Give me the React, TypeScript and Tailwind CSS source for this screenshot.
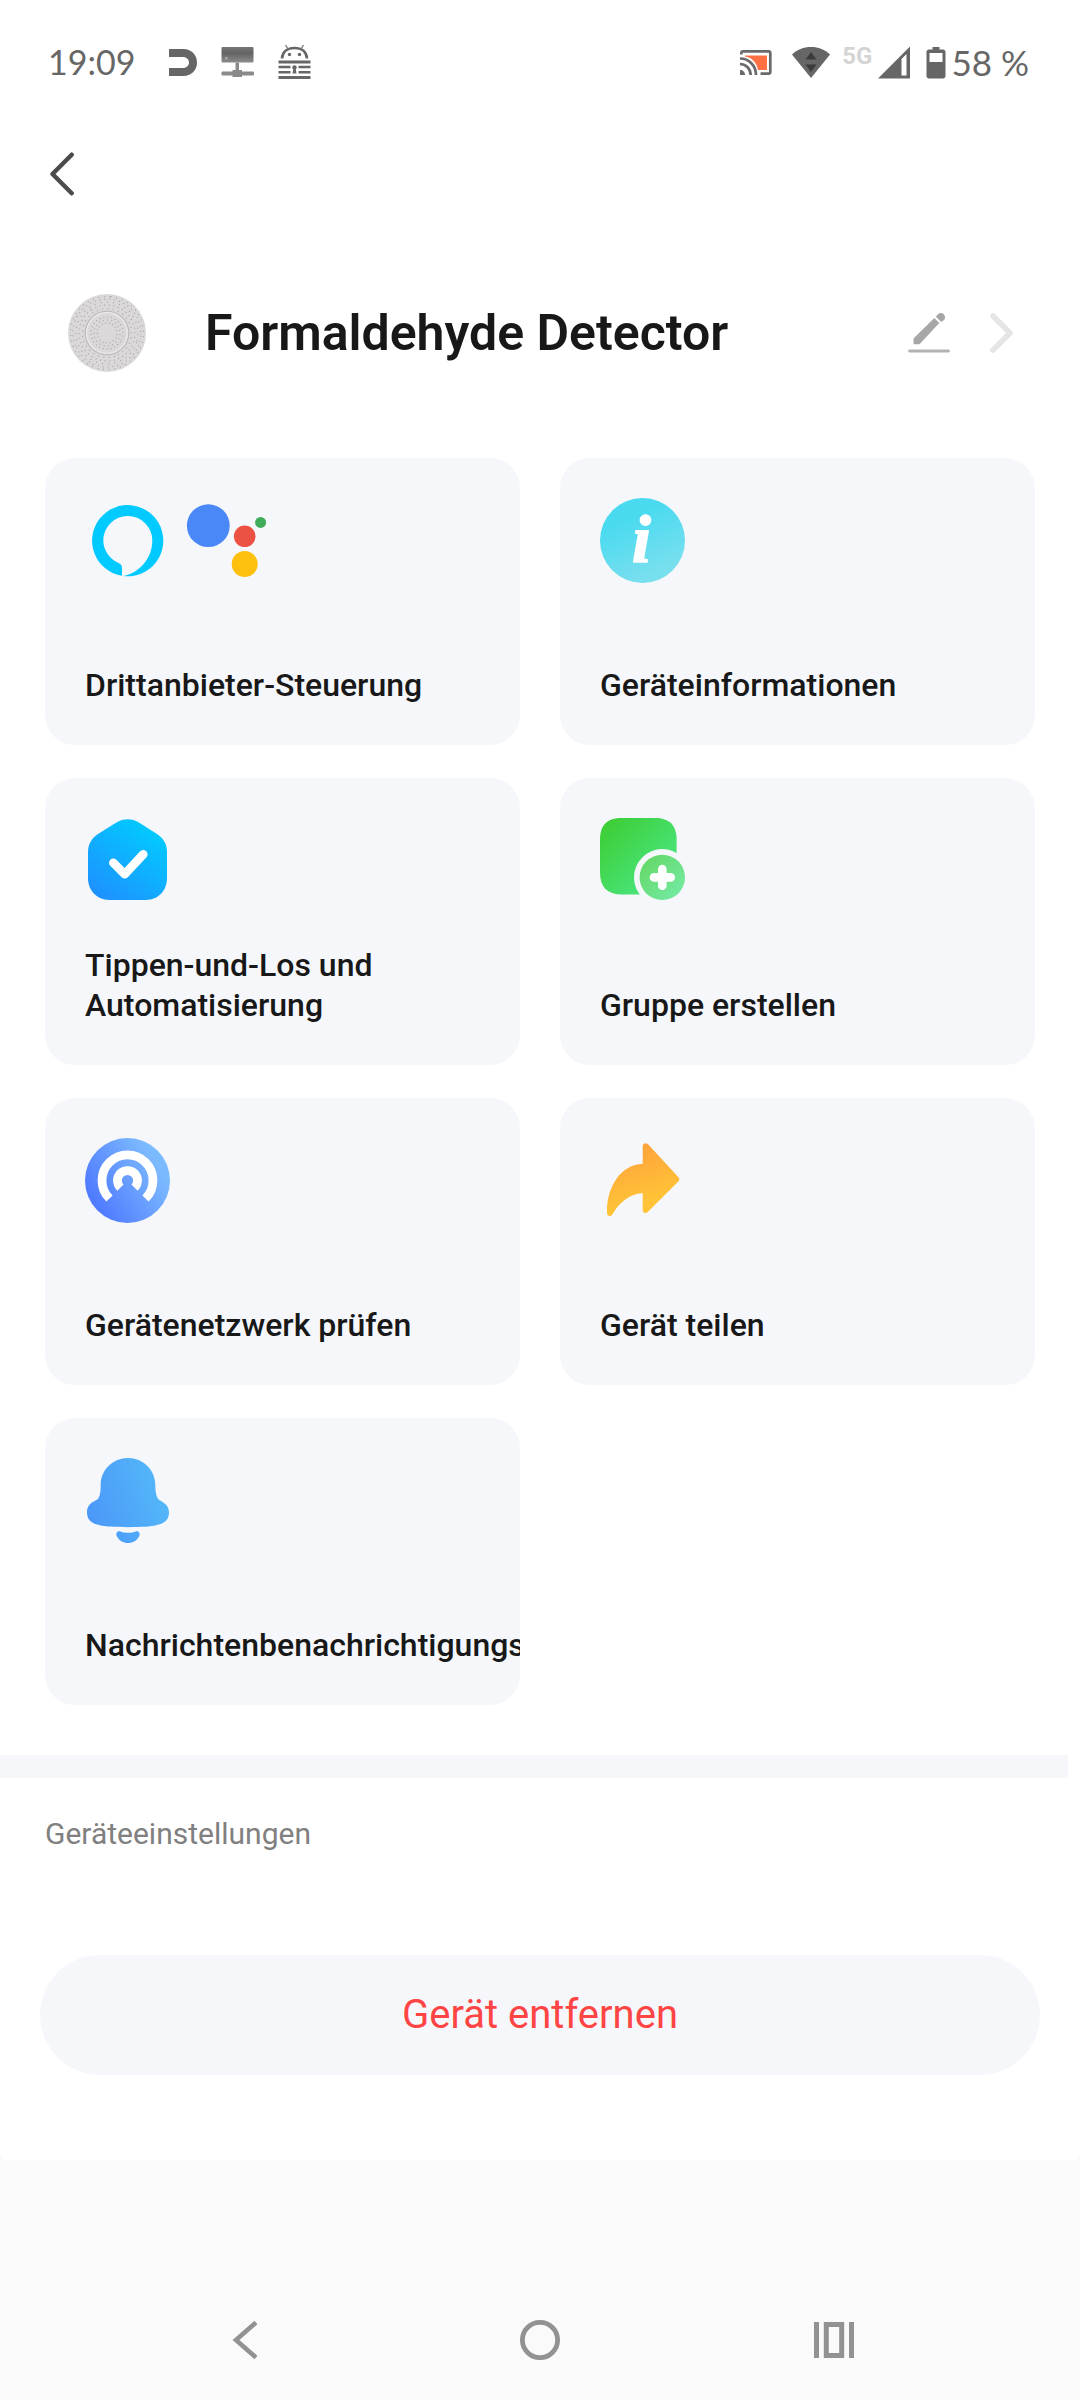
import React from "react";

interface Tile {
  id: string;
  label: string;
  icon: React.ReactNode;
}

function AlexaIcon() {
  return (
    <svg className="h-[85px] w-[85px]" viewBox="0 0 85 85" aria-hidden="true">
      <path
        fill="#00caff"
        d="M37 77.84V70C37 68 36.5 66.3 34 65.2C25 61.5 18.3 52.5 18.3 42.5A24.5 24.5 0 0 1 67.3 42.5C67.3 60 55 74.5 38.5 78.05A35.6 35.6 0 1 0 37 77.84Z"
      />
    </svg>
  );
}

function AssistantIcon() {
  return (
    <svg className="h-[85px] w-[85px]" viewBox="0 0 85 85" aria-hidden="true">
      <circle cx="23.3" cy="27.7" r="21.4" fill="#4a88f8" />
      <circle cx="59.7" cy="38.3" r="10.8" fill="#ed5144" />
      <circle cx="75.6" cy="24.4" r="5.5" fill="#3fac59" />
      <circle cx="59.7" cy="66" r="13" fill="#fdc00f" />
    </svg>
  );
}

function InfoIcon() {
  return (
    <svg className="h-[85px] w-[85px]" viewBox="0 0 85 85" aria-hidden="true">
      <defs>
        <linearGradient id="info" x1="0.3" y1="0.1" x2="0.7" y2="1">
          <stop offset="0.15" stopColor="#4adaf0" />
          <stop offset="0.85" stopColor="#77dfee" />
        </linearGradient>
      </defs>
      <circle cx="42.5" cy="42.5" r="42.5" fill="url(#info)" />
      <text
        x="32"
        y="64"
        fill="#fff"
        stroke="#fff"
        strokeWidth="1.6"
        strokeLinejoin="round"
        className="font-['Liberation_Serif',serif] text-[68px] font-bold italic"
      >
        i
      </text>
    </svg>
  );
}

function SceneIcon() {
  return (
    <svg className="h-[85px] w-[85px]" viewBox="0 0 85 85" aria-hidden="true">
      <defs>
        <linearGradient id="scene" x1="0.15" y1="1" x2="0.8" y2="0.1">
          <stop offset="0" stopColor="#1e90ff" />
          <stop offset="1" stopColor="#02caff" />
        </linearGradient>
      </defs>
      <path
        fill="url(#scene)"
        d="M31 4.7C38.5 .2 47 .2 54.3 4.7L72 16C78.5 20.2 82 26.5 82 33.7V60.3C82 72.5 73 82 61 82H24.3C12 82 3 72.5 3 60.3V33.7C3 26.5 6.5 20.2 13 16Z"
      />
      <path d="M28.3 44.7L39.7 56.3L58.3 36.3" fill="none" stroke="#fff" strokeWidth="8.6" strokeLinecap="round" strokeLinejoin="round" />
    </svg>
  );
}

function GroupIcon() {
  return (
    <svg className="h-[85px] w-[85px]" viewBox="0 0 85 85" aria-hidden="true">
      <defs>
        <linearGradient id="group" x1="0" y1="0" x2="1" y2="1">
          <stop offset="0.05" stopColor="#3dcd33" />
          <stop offset="0.8" stopColor="#4ae57f" />
        </linearGradient>
        <linearGradient id="plus" x1="0.1" y1="0.1" x2="0.9" y2="0.9">
          <stop offset="0" stopColor="#65d868" />
          <stop offset="1" stopColor="#73eaa2" />
        </linearGradient>
      </defs>
      <path
        fill="url(#group)"
        d="M22 0H54.6C70 0 76.6 7.5 76.6 22V54.6C76.6 70 69 76.6 54.6 76.6H22C7 76.6 0 69 0 54.6V22C0 7 7 0 22 0Z"
      />
      <circle cx="62.3" cy="59.4" r="28.3" fill="#f5f7fb" />
      <circle cx="62.3" cy="59.4" r="22.7" fill="url(#plus)" />
      <path d="M54 59.4H70.7M62.3 51V67.8" stroke="#fff" strokeWidth="8.6" strokeLinecap="round" />
    </svg>
  );
}

function NetworkIcon() {
  return (
    <svg className="h-[85px] w-[85px]" viewBox="0 0 85 85" aria-hidden="true">
      <defs>
        <linearGradient id="network" x1="0.1" y1="0.8" x2="0.9" y2="0.3">
          <stop offset="0.05" stopColor="#507cff" />
          <stop offset="0.95" stopColor="#7cbaff" />
        </linearGradient>
      </defs>
      <circle cx="42.5" cy="42.5" r="42.5" fill="url(#network)" />
      <path d="M24.5 60.5A25.5 25.5 0 1 1 60.5 60.5" fill="none" stroke="#fff" strokeWidth="8.8" />
      <path d="M35.4 49.6A10 10 0 1 1 49.6 49.6" fill="none" stroke="#fff" strokeWidth="8.8" />
    </svg>
  );
}

function ShareIcon() {
  return (
    <svg className="h-[85px] w-[85px]" viewBox="0 0 85 85" aria-hidden="true">
      <defs>
        <linearGradient id="share" x1="0.3" y1="0" x2="0.6" y2="1">
          <stop offset="0.1" stopColor="#ffa53b" />
          <stop offset="0.8" stopColor="#ffc337" />
        </linearGradient>
      </defs>
      <path
        fill="url(#share)"
        d="M42.7 8.5C42.7 5.3 46 4.3 48 6.3L78.5 39.3C79.7 40.7 79.7 42 78.5 43.3L48 73.8C46 76 42.7 75.3 42.7 72.3V55C30 56 20 63.5 12.7 76C10.8 79.3 7 78.5 7 74.5C6.5 48 21.5 26.5 42.7 25.7Z"
      />
    </svg>
  );
}

function BellIcon() {
  return (
    <svg className="h-[85px] w-[85px]" viewBox="0 0 85 85" aria-hidden="true">
      <defs>
        <linearGradient id="bell" gradientUnits="userSpaceOnUse" x1="5" y1="62" x2="80" y2="35">
          <stop offset="0" stopColor="#4b98f8" />
          <stop offset="1" stopColor="#54b7f9" />
        </linearGradient>
      </defs>
      <path
        fill="url(#bell)"
        d="M43 0C28 0 16 11.5 15.7 26.5C15.7 32 15.5 37 13.3 40.5C12 43 2 44 2 54.5C2 62.5 7 65.5 15 67.3C23 69.8 63 69.8 71 67.3C79 65.5 84 62.5 84 54.5C84 45 75 43.5 73 40.7C70.7 37 70.3 32 70.3 26.5C70 11.5 58 0 43 0Z"
      />
      <path fill="url(#bell)" d="M34.5 73.3C40 75.3 46 75.3 51.5 73.3C54 72.8 55.3 75.5 54.3 78C52 82.5 48 85 43 85C38 85 34 82.5 31.7 78C30.7 75.5 32 72.8 34.5 73.3Z" />
    </svg>
  );
}

const TILES: Tile[] = [
  { id: "third-party", label: "Drittanbieter-Steuerung", icon: <><AlexaIcon /><AssistantIcon /></> },
  { id: "info", label: "Geräteinformationen", icon: <InfoIcon /> },
  { id: "automation", label: "Tippen-und-Los und Automatisierung", icon: <SceneIcon /> },
  { id: "group", label: "Gruppe erstellen", icon: <GroupIcon /> },
  { id: "network", label: "Gerätenetzwerk prüfen", icon: <NetworkIcon /> },
  { id: "share", label: "Gerät teilen", icon: <ShareIcon /> },
  { id: "notifications", label: "Nachrichtenbenachrichtigungseinstellungen", icon: <BellIcon /> },
];

function StatusBar() {
  return (
    <div className="flex h-[124px] items-center justify-between pr-[51px] pl-12 font-['Lato',sans-serif] text-[34px] leading-10 text-[#666666]">
      <div className="flex items-center gap-6">
        <span className="pr-[10px]">19:09</span>
        <svg className="h-[34px] w-7" viewBox="0 0 28 34" aria-hidden="true">
          <path fill="#666" d="M0 4H14.5C22 4 28 9.5 28 17.5S22 31 14.5 31H0V23H14C17.5 23 20 20.5 20 17.5S17.5 12 14 12H0Z" />
        </svg>
        <svg className="h-[34px] w-[33px]" viewBox="0 0 33 34" aria-hidden="true">
          <defs>
            <linearGradient id="screen" x1="0" y1="0" x2="0" y2="1">
              <stop offset="0" stopColor="#777" />
              <stop offset="0.4" stopColor="#636363" />
              <stop offset="1" stopColor="#8c8c8c" />
            </linearGradient>
          </defs>
          <rect x="0.5" y="2" width="32" height="15.5" rx="1" fill="url(#screen)" />
          <rect x="4" y="12" width="2.5" height="2.5" fill="#aaa" />
          <path d="M14.5 17.5H18V25H21V26.5H32C33.5 26.5 33.5 30.5 32 30.5H21V32H11.5V30.5H1.5C0 30.5 0 26.5 1.5 26.5H11.5V25H14.5Z" fill="#8a8a8a" />
        </svg>
        <svg className="h-[34px] w-[33px]" viewBox="0 0 33 34" aria-hidden="true">
          <path d="M4 13.5C4.5 6.5 9.5 3 16.5 3S28.5 6.5 29 13.5" fill="none" stroke="#666" strokeWidth="2.6" />
          <path d="M7.5 0L10 4M25.5 0L23 4" stroke="#777" strokeWidth="1.3" />
          <circle cx="11.5" cy="9.5" r="1.7" fill="#666" />
          <circle cx="21.5" cy="9.5" r="1.7" fill="#666" />
          <path d="M0.5 17H32.5M0.5 32.5H32.5" stroke="#666" strokeWidth="2.8" />
          <path d="M0.5 22H12.5M20.5 22H32.5M0.5 27.2H12.5M20.5 27.2H32.5" stroke="#666" strokeWidth="2.6" />
          <circle cx="16.5" cy="22.5" r="2.2" fill="#666" />
          <path d="M15.7 22H17.3L18.5 28.5H14.5Z" fill="#666" />
        </svg>
      </div>
      <div className="flex items-center">
        <svg className="mr-5 h-[34px] w-8" viewBox="0 0 32 34" aria-hidden="true">
          <path d="M5 10.5H27V25H18C17 18 12 12.5 5 11.5Z" fill="#ff7043" />
          <path d="M1.3 9.5V8C1.3 7 2 6.3 3 6.3H28.5C29.6 6.3 30.3 7 30.3 8V27C30.3 28 29.6 28.7 28.5 28.7H20.5" fill="none" stroke="#6a6a6a" strokeWidth="2.7" />
          <path d="M0 13.5C9 13.5 16 20.5 16 30M0 19C6 19 10.7 24 10.7 30" fill="none" stroke="#6a6a6a" strokeWidth="2.7" />
          <path d="M0 25C3 25 5 27 5 30H0Z" fill="#6a6a6a" />
        </svg>
        <svg className="mr-3 h-[34px] w-[38px]" viewBox="0 0 38 34" aria-hidden="true">
          <path d="M19 33L0 9.5C5 4.5 11.5 2 19 2S33 4.5 38 9.5Z" fill="#666" />
          <path d="M19 7L24.5 14.5H13.5ZM13.5 19.5H24.5L19 27Z" fill="#3b3b3b" />
        </svg>
        <span className="mr-[6px] pb-3 font-['Roboto',sans-serif] text-2xl leading-6 font-bold text-[#d4d4d4]">5G</span>
        <svg className="mr-4 h-[34px] w-8" viewBox="0 0 32 34" aria-hidden="true">
          <path fillRule="evenodd" d="M32 1.5V33.5H0ZM28.5 9L23.5 14V30.5H28.5Z" fill="#666" />
        </svg>
        <svg className="mr-[5px] h-[34px] w-5" viewBox="0 0 20 34" aria-hidden="true">
          <path fillRule="evenodd" d="M6.5 2H13.5V4.5H17C18.5 4.5 19.5 5.5 19.5 7V31C19.5 32.5 18.5 33.5 17 33.5H3C1.5 33.5 0.5 32.5 0.5 31V7C0.5 5.5 1.5 4.5 3 4.5H6.5ZM3.5 8V17H16.5V8Z" fill="#666" />
        </svg>
        <span className="text-[35px]">58 %</span>
      </div>
    </div>
  );
}

// perforated round housing of the sensor
const HOLE_RINGS = [
  { r: 10, gap: "1 2.7" },
  { r: 13, gap: "1 3.3" },
  { r: 16, gap: "1 2.9" },
  { r: 24.5, gap: "1 4.3" },
  { r: 28, gap: "1 3.6" },
  { r: 31, gap: "1 5.2" },
  { r: 34, gap: "1 3.9" },
  { r: 36.5, gap: "1 4.7" },
];

function DetectorImage() {
  return (
    <svg className="h-[78px] w-[78px] shrink-0" viewBox="0 0 78 78" role="img" aria-label="Formaldehyde Detector">
      <circle cx="39" cy="39" r="39" fill="#dad8d8" />
      {HOLE_RINGS.map((ring) => (
        <circle
          key={ring.r}
          cx="39"
          cy="39"
          r={ring.r}
          fill="none"
          stroke="#a3a1a1"
          strokeWidth="1.1"
          strokeDasharray={ring.gap}
          transform={`rotate(${ring.r * 47} 39 39)`}
        />
      ))}
      <circle cx="39" cy="39" r="21.8" fill="none" stroke="#bfbdbd" strokeWidth="1.3" />
      <circle cx="39" cy="39" r="20.3" fill="none" stroke="#ebe9e9" strokeWidth="1.2" />
    </svg>
  );
}

function ActionTile({ tile }: { tile: Tile }) {
  return (
    <button
      type="button"
      className="flex h-[287px] min-w-0 cursor-pointer flex-col justify-between overflow-hidden rounded-[30px] bg-[#f5f7fb] p-10 text-left"
    >
      <span className="flex gap-[15px]">{tile.icon}</span>
      <span className="text-[32px] leading-10 font-medium text-[#181818]">{tile.label}</span>
    </button>
  );
}

export default function App() {
  return (
    <div className="flex min-h-screen flex-col bg-[#fafafa] font-['Roboto',sans-serif]">
      <main className="rounded-b-md bg-white">
        <StatusBar />

        <header className="flex h-[100px] items-center pl-[50px]">
          <button type="button" aria-label="Zurück" className="cursor-pointer">
            <svg className="h-11 w-6" viewBox="0 0 24 44" aria-hidden="true">
              <path d="M21.7 2.7L2.5 22L21.7 41.3" fill="none" stroke="#4b4b4b" strokeWidth="4.4" strokeLinecap="round" strokeLinejoin="round" />
            </svg>
          </button>
        </header>

        {/* Device name */}
        <section className="flex h-[218px] items-center pr-[66px] pl-[68px]">
          <DetectorImage />
          <h1 className="ml-[59px] flex-1 text-[50px] leading-[60px] font-semibold text-[#181818]">Formaldehyde Detector</h1>
          <button type="button" aria-label="Name bearbeiten" className="mr-10 cursor-pointer">
            <svg className="h-[42px] w-[42px]" viewBox="0 0 42 42" aria-hidden="true">
              <path d="M5.5 26.5L26.3 6L31.3 11L11.5 32.3H5.5Z" fill="#a7a7a7" />
              <path d="M27.8 4.7L30 2.2C33.5 -1.2 39.5 4 36 8L33.2 10Z" fill="#a7a7a7" />
              <path d="M1.5 39H40.5" stroke="#b3b3b3" strokeWidth="2.8" strokeLinecap="round" />
            </svg>
          </button>
          <button type="button" aria-label="Details" className="cursor-pointer">
            <svg className="h-10 w-6" viewBox="0 0 24 40" aria-hidden="true">
              <path d="M3 3L20 20L3 37" fill="none" stroke="#e5e5e5" strokeWidth="5.6" strokeLinecap="round" strokeLinejoin="round" />
            </svg>
          </button>
        </section>

        {/* Actions */}
        <section className="grid grid-cols-2 gap-x-10 gap-y-[33px] px-[45px] pt-4">
          {TILES.map((tile) => (
            <ActionTile key={tile.id} tile={tile} />
          ))}
        </section>

        <div className="mt-[50px] mr-3 h-[23px] bg-[#f5f7fb]" />

        <h2 className="px-[45px] pt-[38px] text-[30px] leading-9 text-[#808080]">Geräteeinstellungen</h2>

        <div className="px-10 pt-[103px] pb-[85px]">
          <button
            type="button"
            className="h-[120px] w-full cursor-pointer rounded-full bg-[#f5f7fb] text-[40px] leading-[48px] text-[#ff4444]"
          >
            Gerät entfernen
          </button>
        </div>
      </main>

      {/* System navigation */}
      <nav className="mt-auto grid grid-cols-3 justify-items-center px-[99px] pt-[160px] pb-10">
        <button type="button" aria-label="System zurück" className="cursor-pointer">
          <svg className="h-10 w-10" viewBox="0 0 40 40" aria-hidden="true">
            <path d="M30 2.5L10 20L30 37.5" fill="none" stroke="#929292" strokeWidth="4.6" />
          </svg>
        </button>
        <button type="button" aria-label="Startbildschirm" className="cursor-pointer">
          <svg className="h-10 w-10" viewBox="0 0 40 40" aria-hidden="true">
            <circle cx="20" cy="20" r="17.6" fill="none" stroke="#929292" strokeWidth="4.8" />
          </svg>
        </button>
        <button type="button" aria-label="Letzte Apps" className="cursor-pointer">
          <svg className="h-10 w-10" viewBox="0 0 40 40" aria-hidden="true">
            <path d="M2.5 2V38M37.5 2V38" stroke="#929292" strokeWidth="5" />
            <rect x="12.3" y="4.5" width="15.4" height="31" fill="none" stroke="#929292" strokeWidth="5" />
          </svg>
        </button>
      </nav>
    </div>
  );
}
